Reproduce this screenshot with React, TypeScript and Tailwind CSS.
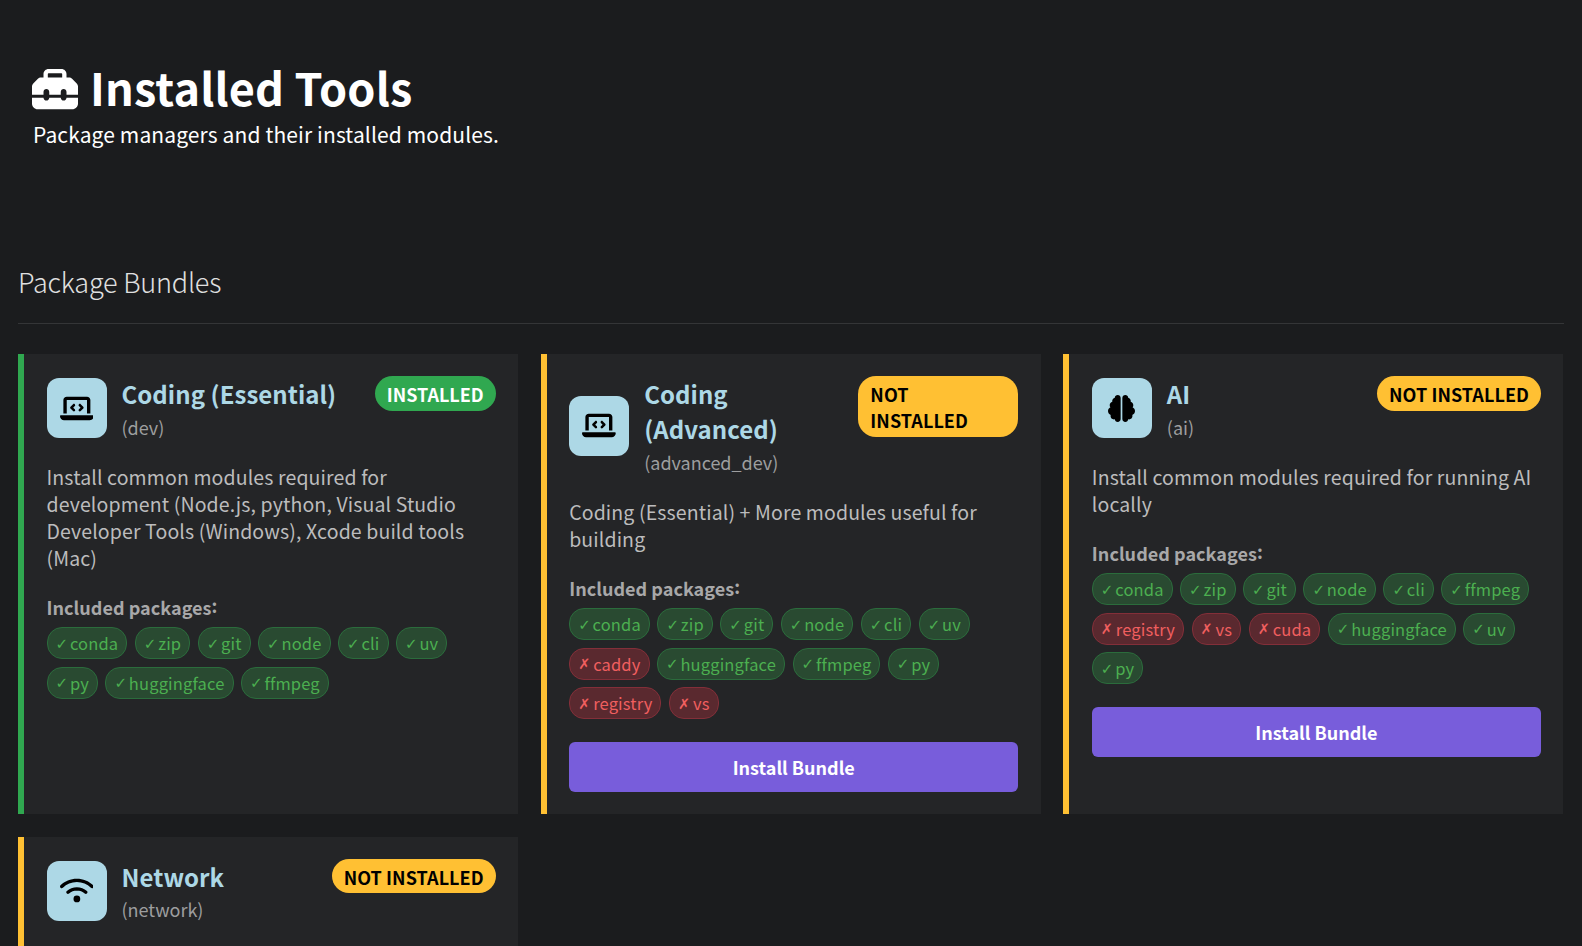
import React from 'react';
import { FaToolbox, FaLaptopCode, FaBrain, FaWifi } from 'react-icons/fa6';
import type { IconType } from 'react-icons';
import clsx from 'clsx';

interface Pkg {
  name: string;
  installed: boolean;
}

interface Bundle {
  id: string;
  title: string;
  description: string;
  icon: IconType;
  iconWidth: string;
  installed: boolean;
  packages: Pkg[];
}

const ok = (name: string): Pkg => ({ name, installed: true });
const missing = (name: string): Pkg => ({ name, installed: false });

const bundles: Bundle[] = [
  {
    id: 'dev',
    title: 'Coding (Essential)',
    description:
      'Install common modules required for development (Node.js, python, Visual Studio Developer Tools (Windows), Xcode build tools (Mac)',
    icon: FaLaptopCode,
    iconWidth: 'w-[33.75px]',
    installed: true,
    packages: [ok('conda'), ok('zip'), ok('git'), ok('node'), ok('cli'), ok('uv'), ok('py'), ok('huggingface'), ok('ffmpeg')],
  },
  {
    id: 'advanced_dev',
    title: 'Coding (Advanced)',
    description: 'Coding (Essential) + More modules useful for building',
    icon: FaLaptopCode,
    iconWidth: 'w-[33.75px]',
    installed: false,
    packages: [
      ok('conda'), ok('zip'), ok('git'), ok('node'), ok('cli'), ok('uv'),
      missing('caddy'), ok('huggingface'), ok('ffmpeg'), ok('py'),
      missing('registry'), missing('vs'),
    ],
  },
  {
    id: 'ai',
    title: 'AI',
    description: 'Install common modules required for running AI locally',
    icon: FaBrain,
    iconWidth: 'w-[27px]',
    installed: false,
    packages: [
      ok('conda'), ok('zip'), ok('git'), ok('node'), ok('cli'), ok('ffmpeg'),
      missing('registry'), missing('vs'), missing('cuda'), ok('huggingface'), ok('uv'), ok('py'),
    ],
  },
  {
    id: 'network',
    title: 'Network',
    description: '',
    icon: FaWifi,
    iconWidth: 'w-[33.75px]',
    installed: false,
    packages: [],
  },
];

function PackageTag({ name, installed }: Pkg) {
  return (
    <span
      className={clsx(
        'flex items-center h-8 rounded-[15px] border px-[8px] pt-px text-[16.5px] tracking-[0.15px] whitespace-nowrap',
        installed
          ? 'bg-[#294a31] border-[#2b6c3c] text-[#4caf50]'
          : 'bg-[#5a292f] border-[#832f39] text-[#f05f5f]'
      )}
    >
      <span
        className={clsx(
          "font-['DejaVu_Sans'] leading-none pt-px",
          installed ? 'w-[14.4px] text-[15px]' : 'w-[15px] text-[14.5px] font-bold'
        )}
      >
        {installed ? '✓' : '✗'}
      </span>
      {name}
    </span>
  );
}

function BundleCard({ bundle }: { bundle: Bundle }) {
  const Icon = bundle.icon;
  return (
    <div
      className={clsx(
        'flex flex-col bg-[#242527] border-l-6 px-[22.5px] pt-[22px] pb-[22.5px]',
        bundle.installed ? 'border-[#30a850]' : 'border-[#ffc033]'
      )}
    >
      <div className="flex items-start justify-between mb-[23px]">
        <div className="flex items-center gap-[15px]">
          <div className="flex items-center justify-center w-[60px] h-[60px] shrink-0 rounded-xl bg-[#add8e6] text-black">
            <Icon className={clsx('h-[27px]', bundle.iconWidth)} />
          </div>
          <div>
            <h3 className="text-[24px] leading-[35px] tracking-[0.05px] font-bold text-[#add8e6]">{bundle.title}</h3>
            <div className="mt-[1.5px] text-[18px] leading-[27.5px] text-[#9d9e9f]">
              <span className="block translate-y-px">({bundle.id})</span>
            </div>
          </div>
        </div>
        <span
          className={clsx(
            'rounded-[18px] px-3 pt-[5px] pb-[3.5px] text-[18px] leading-[26px] font-bold uppercase',
            bundle.installed ? 'bg-[#30a850] text-white' : 'bg-[#ffc033] text-black tracking-[0.07px]'
          )}
        >
          {bundle.installed ? 'Installed' : 'Not Installed'}
        </span>
      </div>

      <p className="text-[19.5px] leading-[27px] tracking-[0.12px] text-[#bcbcbd] mb-[22.5px]">{bundle.description}</p>

      {bundle.packages.length > 0 && (
        <>
          <div className="text-[18px] leading-[27px] tracking-[0.04px] font-bold text-[#a8a8a9] mb-[6.5px]">
            Included packages<span className="relative -top-[2px]">:</span>
          </div>
          <div className="flex flex-wrap gap-[7.5px] mb-[22.5px]">
            {bundle.packages.map((pkg) => (
              <PackageTag key={pkg.name} {...pkg} />
            ))}
          </div>
          {!bundle.installed && (
            <button className="h-[50px] w-full shrink-0 rounded-md bg-[#785ddb] pt-0.5 text-[18px] font-bold text-white">
              Install Bundle
            </button>
          )}
        </>
      )}
    </div>
  );
}

export default function App() {
  return (
    <div className="h-[946px] overflow-hidden bg-[#1b1c1e] text-white font-['Noto_Sans_CJK_SC',sans-serif]">
      <header className="px-[33px] pt-[58px]">
        <h1 className="flex items-center gap-[12px] text-[45px] leading-[58px] tracking-[0.14px] font-bold">
          <FaToolbox className="-ml-px mt-[3px] text-[46px]" />
          Installed Tools
        </h1>
        <p className="mt-px text-[21px] leading-[34px] tracking-[0.12px]">Package managers and their installed modules.</p>
      </header>

      <section className="mt-[113px] pl-[18px] pr-[18.5px]">
        <h2 className="text-[27px] leading-[36px] tracking-[-0.2px] font-extralight text-[#e0e0e0] pb-[23px] border-b border-[#343537]">
          Package Bundles
        </h2>
        <div className="mt-[30px] grid grid-cols-3 auto-rows-[minmax(160px,auto)] gap-[22.5px]">
          {bundles.map((bundle) => (
            <BundleCard key={bundle.id} bundle={bundle} />
          ))}
        </div>
      </section>
    </div>
  );
}
